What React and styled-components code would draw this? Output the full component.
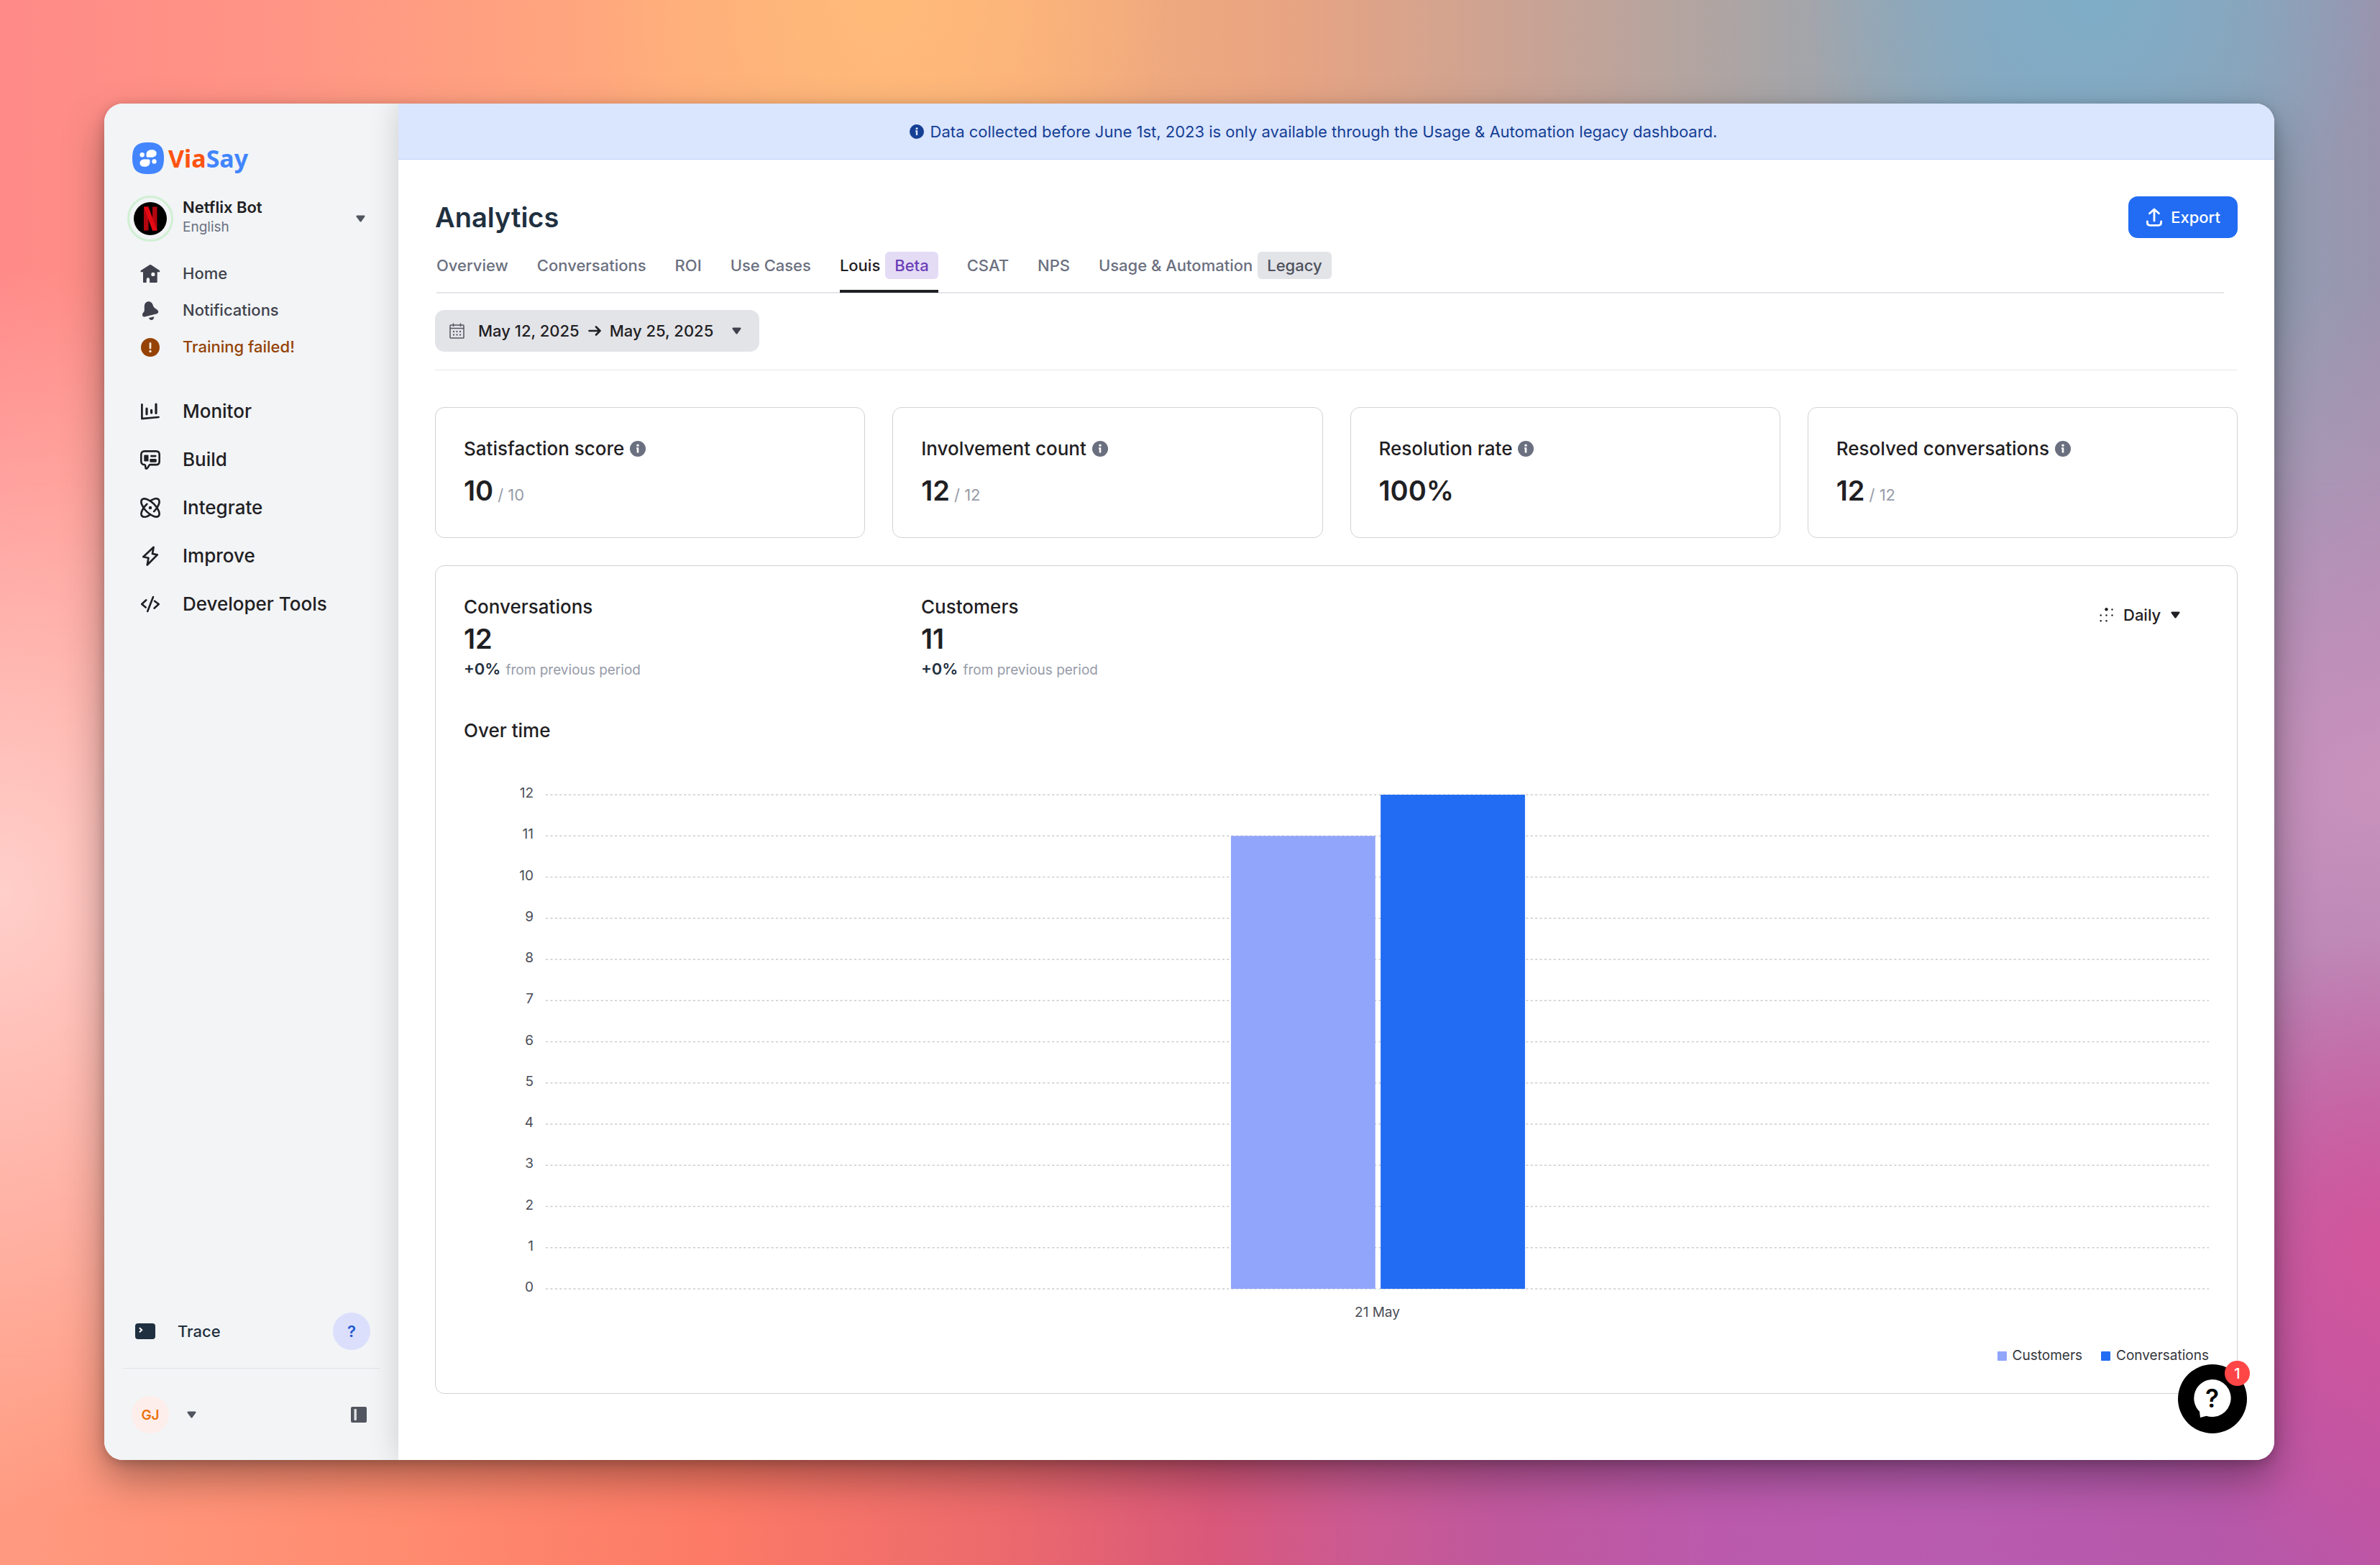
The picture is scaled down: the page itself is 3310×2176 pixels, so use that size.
import React from "react";
import styled, { createGlobalStyle, css } from "styled-components";

const ink = "#1f2023";
const slate = "#1f3040";
const muted = "#6b7080";
const faint = "#979ba8";
const line = "#d0d2d6";
const blue = "#226cf3";
const periwinkle = "#91a5fb";

const GlobalStyle = createGlobalStyle`
  *, *::before, *::after { box-sizing: border-box; }
  body {
    margin: 0;
    font-family: Inter, "Liberation Sans", sans-serif;
    color: ${ink};
    -webkit-font-smoothing: antialiased;
  }
  button, select { font: inherit; color: inherit; border: 0; background: none; padding: 0; margin: 0; cursor: pointer; }
  a { color: inherit; text-decoration: none; }
  h1, h2, p, ul, dl, dd, dt { margin: 0; padding: 0; font-weight: inherit; }
  ul { list-style: none; }
  svg { display: block; flex: none; }
`;

const Desktop = styled.div`
  position: relative;
  isolation: isolate;
  display: flex;
  min-height: 100vh;
  padding: 144px 147px 146px 145px;
  background:
    radial-gradient(ellipse 12% 18% at 88% 0%, #7fadc8 0%, #7fadc800 100%),
    radial-gradient(ellipse 12% 22% at 37% 0%, #ffba79 0%, #ffba7900 100%),
    linear-gradient(90deg, #ff8a88 0%, #ff9585 12%, #ffab7c 28%, #fcb179 40%, #e8a482 54%, #caa394 64%, #a9a5a6 74%, #8ba6bb 84%, #8fa0b4 94%, #9a94ae 100%);

  &::before {
    content: "";
    position: absolute;
    inset: 0;
    z-index: -1;
    background: linear-gradient(90deg, #ff9a80 0%, #ff8c70 16%, #fc7a66 30%, #ec6a6c 42%, #d9587a 51%, #cb5a92 57%, #c0589d 63%, #bb5aac 72%, #b85cb0 82%, #b658a9 93%, #bd55a5 100%);
    mask-image: linear-gradient(transparent 30%, #000 88%);
  }

  &::after {
    content: "";
    position: absolute;
    inset: 0;
    z-index: -1;
    background:
      radial-gradient(ellipse 22% 40% at 0% 57%, #ffcfca 0%, #ffcfca00 100%),
      radial-gradient(ellipse 12% 20% at 100% 80%, #d3559b 0%, #d3559b00 100%),
      radial-gradient(ellipse 24% 32% at 100% 50%, #c992bd 0%, #c992bd00 100%);
  }
`;

const Window = styled.div`
  position: relative;
  display: flex;
  flex: 1;
  min-width: 0;
  border-radius: 26px;
  overflow: hidden;
  background: #fff;
`;

const WindowShadow = styled.div`
  display: flex;
  flex: 1;
  min-width: 0;
  border-radius: 26px;
  box-shadow: 0 26px 56px rgba(0, 0, 0, 0.34), 0 4px 16px rgba(0, 0, 0, 0.2);
`;

/* ---------- Sidebar ---------- */

const Sidebar = styled.aside`
  display: flex;
  flex-direction: column;
  flex: none;
  width: 409px;
  padding: 54px 26px 37px;
  background: #f2f4f6;
`;

const Brand = styled.a`
  display: flex;
  align-items: center;
  gap: 6px;
  height: 44px;
  padding-left: 13px;
  font: 700 34px/44px "Noto Sans", "Open Sans", sans-serif;
  color: #ff5310;
`;

const BrandAccent = styled.span`
  color: #4285ff;
`;

const BotSwitcher = styled.button`
  display: flex;
  align-items: center;
  gap: 13px;
  margin-top: 30px;
  padding: 0 20px 0 6px;
  text-align: left;
`;

const BotAvatar = styled.span`
  display: grid;
  place-items: center;
  width: 64px;
  height: 64px;
  border: 3px solid #d0f0d2;
  border-radius: 50%;
`;

const BotText = styled.span`
  display: grid;
  flex: 1;
  padding-bottom: 4px;
`;

const BotName = styled.span`
  font-size: 22px;
  font-weight: 600;
  line-height: 28px;
`;

const BotLanguage = styled.span`
  font-size: 19px;
  line-height: 28px;
  color: ${muted};
`;

const NavList = styled.ul`
  margin-top: ${(p) => (p.$large ? 30 : 19)}px;
`;

const NavLink = styled.a`
  display: flex;
  align-items: center;
  gap: 13px;
  padding-left: 6px;
  font-weight: 500;
  color: ${(p) => (p.$alert ? "#954204" : "#3f424c")};
  font-size: 22px;
  line-height: 51px;
  ${(p) =>
    p.$large &&
    css`
      color: ${ink};
      font-size: 26px;
      line-height: 67px;
    `}
`;

const NavIcon = styled.span`
  display: grid;
  place-items: center;
  width: 64px;
`;

const TraceRow = styled.div`
  display: flex;
  align-items: center;
  justify-content: space-between;
  margin-top: auto;
  padding: 0 13px 25px 17px;
  border-bottom: 1px solid #e1e3e6;
`;

const TraceLink = styled.a`
  display: flex;
  align-items: center;
  gap: 31px;
  font-size: 22px;
  font-weight: 500;
  color: ${slate};
`;

const RoundBadge = styled.span`
  display: grid;
  place-items: center;
  width: 52px;
  height: 52px;
  border-radius: 50%;
  font-weight: 600;
  font-size: ${(p) => (p.$orange ? 19 : 22)}px;
  color: ${(p) => (p.$orange ? "#ec710b" : "#2158cf")};
  background: ${(p) => (p.$orange ? "#feeeeb" : "#dbdffc")};
`;

const AccountRow = styled.div`
  display: flex;
  align-items: center;
  justify-content: space-between;
  padding: 38px 18px 0 12px;
`;

const AccountButton = styled.button`
  display: flex;
  align-items: center;
  gap: 25px;
`;

/* ---------- Main ---------- */

const Main = styled.main`
  position: relative;
  flex: 1;
  min-width: 0;
  background: #fff;
  box-shadow: 0 0 39px rgba(0, 0, 0, 0.16);
`;

const Notice = styled.p`
  display: flex;
  align-items: center;
  justify-content: center;
  gap: 9px;
  height: 78px;
  padding-right: 64px;
  border-bottom: 1px solid #bfd0f8;
  background: #dae5fe;
  color: #143f94;
  font-size: 22px;
`;

const Content = styled.div`
  padding: 51px;
`;

const TitleRow = styled.header`
  display: flex;
  align-items: center;
  justify-content: space-between;
`;

const Title = styled.h1`
  font-size: 38px;
  font-weight: 600;
  line-height: 58px;
  color: ${slate};
`;

const ExportButton = styled.button`
  display: flex;
  align-items: center;
  gap: 11px;
  height: 58px;
  padding: 0 24px;
  border-radius: 13px;
  background: ${blue};
  color: #fff;
  font-size: 22px;
  font-weight: 500;
`;

const Tabs = styled.nav`
  display: flex;
  gap: 40px;
  margin: 19px 19px 0 2px;
  border-bottom: 2px solid #e4e5e8;
`;

const Tab = styled.a`
  display: flex;
  align-items: center;
  gap: 7px;
  margin-bottom: -1px;
  padding-bottom: 15px;
  border-bottom: 4px solid ${(p) => (p.$active ? ink : "transparent")};
  color: ${(p) => (p.$active ? ink : muted)};
  font-size: 22px;
  font-weight: 500;
  line-height: 38px;
`;

const Tag = styled.span`
  padding: 0 13px;
  border-radius: 6px;
  color: ${(p) => (p.$violet ? "#6b3fb8" : "#4d515c")};
  background: ${(p) => (p.$violet ? "#e4dcf5" : "#e3e4e8")};
`;

const Filters = styled.div`
  display: flex;
  margin-top: 23px;
  padding-bottom: 25px;
  border-bottom: 1px solid #e6e7ea;
`;

const DateButton = styled.button`
  display: flex;
  align-items: center;
  gap: 12px;
  height: 58px;
  padding: 0 25px 0 20px;
  border-radius: 13px;
  background: #e3e4e8;
  font-size: 22px;
  font-weight: 500;

  & > :first-child { margin-right: 7px; }
  & > :last-child { margin-left: 14px; }
`;

const KpiGrid = styled.section`
  display: grid;
  grid-template-columns: repeat(4, 1fr);
  gap: 38px;
  margin-top: 51px;
`;

const Card = styled.article`
  padding: 40px 39px;
  border: 1px solid ${line};
  border-radius: 13px;
  background: #fff;
`;

const CardTitle = styled.h2`
  display: flex;
  align-items: center;
  gap: 8px;
  font-size: 26px;
  font-weight: 500;
  line-height: 34px;
`;

const Figure = styled.p`
  display: flex;
  align-items: baseline;
  gap: 6px;
  height: 50px;
  margin-top: ${(p) => (p.$tight ? 2 : 16)}px;
  font-size: 38px;
  font-weight: 600;
  line-height: 50px;
`;

const OutOf = styled.span`
  font-size: 22px;
  font-weight: 400;
  line-height: 24px;
  color: ${faint};
`;

const ChartCard = styled(Card)`
  margin-top: 38px;
`;

const Totals = styled.div`
  display: flex;
`;

const Total = styled.section`
  flex: 0 0 636px;
`;

const Change = styled.p`
  display: flex;
  align-items: baseline;
  gap: 7px;
  height: 30px;
  margin-top: 2px;
  font-size: 19px;
  line-height: 30px;
  color: ${faint};
`;

const ChangeValue = styled.span`
  font-size: 22px;
  font-weight: 600;
  color: ${slate};
`;

const PeriodPicker = styled.label`
  display: flex;
  align-items: center;
  gap: 13px;
  height: 56px;
  margin-left: auto;
  padding-right: 40px;
  font-size: 22px;
  font-weight: 500;
`;

const PeriodSelect = styled.select`
  appearance: none;
  line-height: 30px;
`;

const ChartTitle = styled(CardTitle)`
  margin-top: 54px;
`;

const Chart = styled.figure`
  display: grid;
  grid-template-columns: 97px 1fr;
  column-gap: 17px;
  margin: 60px 0 0;
  font-size: 19px;
  color: #4a4d57;
`;

const ValueAxis = styled.div`
  display: flex;
  flex-direction: column;
  justify-content: space-between;
  height: 707px;
  text-align: right;
  line-height: 20px;
`;

const Plot = styled.svg`
  width: 100%;
  height: 689px;
  margin-top: 11px;
`;

const CategoryAxis = styled.div`
  grid-column: 2;
  margin-top: 13px;
  text-align: center;
  line-height: 24px;
`;

const Legend = styled.figcaption`
  grid-column: 2;
  display: flex;
  justify-content: flex-end;
  gap: 26px;
  margin-top: 36px;
  color: #34363c;
  line-height: 24px;
`;

const LegendItem = styled.span`
  display: flex;
  align-items: center;
  gap: 8px;
  &::before {
    content: "";
    width: 13px;
    height: 13px;
    border-radius: 1px;
    background: ${(p) => p.$color};
  }
`;

const ChatButton = styled.button`
  position: absolute;
  right: 38px;
  bottom: 37px;
  width: 96px;
  height: 96px;
  border-radius: 50%;
  background: #000;
`;

const Unread = styled.span`
  position: absolute;
  top: -5px;
  right: -4px;
  display: grid;
  place-items: center;
  width: 35px;
  height: 35px;
  border-radius: 50%;
  background: #ff4646;
  color: #fff;
  font-size: 20px;
  font-weight: 500;
`;

/* ---------- Icons ---------- */

const Caret = ({ color = "#51555f" }) => (
  <svg width="13" height="10" viewBox="0 0 13 10" fill={color} aria-hidden="true">
    <path d="M1.6.4h9.8c1 0 1.5 1.2.8 2L7.5 8.900c-.5.7-1.5.7-2 0L.7 2.400C.1 1.600.6.400 1.600.400Z" />
  </svg>
);

const InfoIcon = ({ size, color, hole }) => (
  <svg width={size} height={size} viewBox="0 0 22 22" aria-hidden="true">
    <circle cx="11" cy="11" r="11" fill={color} />
    <circle cx="11" cy="6.300" r="1.700" fill={hole} />
    <path d="M9 9.200h3.300V16.600h-2.600v-5.400H9Z" fill={hole} />
  </svg>
);

const BrandMark = () => (
  <svg width="44" height="44" viewBox="0 0 44 44" aria-hidden="true">
    <path d="M22 0C37 0 44 5 44 22S37 44 22 44 0 39 0 22 7 0 22 0Z" fill="#4285ff" />
    <g fill="#fff">
      <circle cx="13.700" cy="17.300" r="3.200" />
      <circle cx="30.500" cy="26.500" r="3.200" />
      <path d="M19.500 16.500c0-4 3-6.300 7.500-6.300 4.200 0 6.700 2 6.700 5s-2.500 5.500-6.700 5.500h-5.500c-1.300 0-2-.7-2-2Z" />
      <path d="M24.500 27.500c0 4-3 6.300-7.200 6.300-4.500 0-6.800-2-6.800-5.100 0-3 2.500-5.200 6.500-5.200h5.500c1.300 0 2 .7 2 2Z" />
    </g>
  </svg>
);

const NetflixMark = () => (
  <svg width="46" height="46" viewBox="0 0 46 46" aria-hidden="true">
    <circle cx="23" cy="23" r="23" fill="#000" />
    <rect x="14" y="6.500" width="6.500" height="33" fill="#b1060f" />
    <rect x="26" y="6.500" width="6.500" height="33" fill="#b1060f" />
    <path d="M14 6.500h6.500l12 33H26Z" fill="#e50914" />
  </svg>
);

const glyphs = {
  home: (
    <path
      fill="currentColor"
      fillRule="evenodd"
      d="M12.700 1.400 1 8.900C.1 9.500.3 11.300 1.600 11.300H4V24.900c0 .7.400 1.100 1.100 1.100h3.600v-4.500a2.200 2.600 0 0 1 4.400 0V26h9.300c.8 0 1.300-.4 1.300-1.200V11.300h2.400c1.300 0 1.700-1.600.7-2.400L15.500 1.400a2.500 2.500 0 0 0-2.800 0ZM17.900 11.800a2.600 2.600 0 1 1 0 5.200 2.600 2.600 0 0 1 0-5.200Z"
    />
  ),
  bell: (
    <path
      fill="currentColor"
      d="M3 20c0-3 2.700-4 2.800-6.500V8c0-4 2.700-6.700 6-6.700 3.300 0 5.300 2.500 6.300 6.200 1.100 3.700 7.100 4.600 7.100 8 0 2-1.500 2.600-3 3L7 22.300C5 22.800 3 22.200 3 20ZM12 24l7.200-1.800c.2 2.800-1.700 4.800-3.500 4.800-1.700 0-3.200-1-3.700-3Z"
    />
  ),
  alert: (
    <>
      <circle cx="14" cy="14" r="13" fill="currentColor" />
      <path d="M14 8.500v6.500" stroke="#f3e4d8" strokeWidth="2.800" strokeLinecap="round" />
      <circle cx="14" cy="19.500" r="1.700" fill="#f3e4d8" />
    </>
  ),
  monitor: (
    <g fill="none" stroke="currentColor" strokeLinecap="round" strokeLinejoin="round">
      <path strokeWidth="2.700" d="M2.400 4.400V24.200L25.600 22" />
      <path strokeWidth="3.200" d="M9 10v7.800M15.600 12.400v3.600M22 4v12.500" />
    </g>
  ),
  build: (
    <>
      <path
        fill="none"
        stroke="currentColor"
        strokeWidth="2.600"
        strokeLinejoin="round"
        d="M6 2.400h16c3 0 4.700 1.700 4.700 4.700v9.300c0 3-1.700 4.700-4.700 4.700h-8.400c-2 0-2.300 5.600-5.300 5.600-1.600 0-.2-5.200-2.300-5.600-3 0-4.700-1.700-4.700-4.700V7.100c0-3 1.700-4.700 4.700-4.700Z"
      />
      <rect x="5.300" y="7.400" width="6.200" height="9" rx="1.200" fill="currentColor" />
      <rect x="14" y="7.800" width="8.600" height="2.600" rx="1.300" fill="currentColor" />
      <rect x="13.300" y="13" width="9.400" height="4.800" rx="1.200" fill="currentColor" />
    </>
  ),
  integrate: (
    <g transform="translate(-2.800 -2.800) scale(1.400)" fill="none" stroke="currentColor" strokeWidth="1.900" strokeLinecap="round">
      <circle cx="12" cy="12" r="1.600" fill="currentColor" stroke="none" />
      <path d="M20.200 20.200c2.040-2.030.02-7.360-4.500-11.900-4.540-4.520-9.870-6.540-11.900-4.500-2.040 2.030-.02 7.360 4.500 11.900 4.540 4.520 9.870 6.540 11.900 4.500Z" />
      <path d="M12 5.200c3.600-2.400 6.700-2.900 8.200-1.400 2 2 0 7.400-4.500 11.900M8.700 8.300c-4.900 4.500-6.900 9.900-4.900 11.900 1.500 1.500 4.600 1 8.200-1.400" />
    </g>
  ),
  improve: (
    <path
      fill="none"
      stroke="currentColor"
      strokeWidth="2.700"
      strokeLinejoin="round"
      d="M18.600 1.800 4.300 15.300l7.200 1.500-1.700 9.700L23.800 12.400 17 11Z"
    />
  ),
  code: (
    <path
      fill="none"
      stroke="currentColor"
      strokeWidth="2.600"
      strokeLinecap="round"
      strokeLinejoin="round"
      d="M8.300 8.300 2.200 14l5.500 4.500M18 4l-7.800 20M20 9.700l5.800 4.300-6.300 5.700"
    />
  ),
};

const Glyph = ({ name }) => (
  <svg width="28" height="28" viewBox="0 0 28 28" aria-hidden="true">
    {glyphs[name]}
  </svg>
);

const TraceIcon = () => (
  <svg width="28" height="22" viewBox="0 0 28 22" aria-hidden="true">
    <rect width="28" height="22" rx="4" fill={slate} />
    <path d="m6.500 6.800 2.700 2.500-2.700 2.500" fill="none" stroke="#fff" strokeWidth="2" strokeLinecap="round" />
  </svg>
);

const PanelIcon = () => (
  <svg width="22" height="22" viewBox="0 0 22 22" aria-hidden="true">
    <rect width="22" height="22" rx="2" fill="#51555f" />
    <rect x="4.500" y="3" width="3.400" height="16" rx="1.200" fill="#dfe1e4" />
  </svg>
);

const ExportIcon = () => (
  <svg width="24" height="28" viewBox="0 0 24 28" fill="none" stroke="#fff" strokeWidth="2.800" strokeLinecap="round" strokeLinejoin="round" aria-hidden="true">
    <path d="M12 19V4M5.500 8.800 12 3l6.500 5.800" />
    <path d="M2.400 20v1.600c0 2.600 1.400 3.800 4 3.800h11.200c2.600 0 4-1.200 4-3.800V20" />
  </svg>
);

const CalendarIcon = () => (
  <svg width="21" height="22" viewBox="0 0 21 22" fill="none" stroke="#51555f" strokeWidth="1.500" aria-hidden="true">
    <rect x="1" y="3" width="19" height="18" rx=".8" />
    <path d="M1 7.600h19M5.500.5V5M15.500.5V5" />
    <path strokeWidth="2" strokeDasharray="2 2.500" d="M5 12h11M5 16.500h11" />
  </svg>
);

const ArrowIcon = () => (
  <svg width="18" height="18" viewBox="0 0 18 18" fill="none" stroke={ink} strokeWidth="2.600" strokeLinecap="round" strokeLinejoin="round" aria-hidden="true">
    <path d="M1.500 9h15M11 3.500 16.500 9 11 14.500" />
  </svg>
);

const DotsIcon = () => (
  <svg width="20" height="20" viewBox="0 0 20 20" fill={ink} aria-hidden="true">
    <circle cx="9.500" cy="2.300" r="2.200" />
    {[[17.5, 2.5], [17.5, 10.5], [1.7, 10.5], [9.5, 10.5], [1.7, 18.3], [9.5, 18.3]].map(([x, y]) => (
      <circle key={`${x}-${y}`} cx={x} cy={y} r="1.200" />
    ))}
  </svg>
);

const ChatIcon = () => (
  <svg width="96" height="96" viewBox="0 0 96 96" aria-hidden="true">
    <path fill="#fff" d="M47.500 21a26 26 0 1 1-8 50.700L31 74l-1-8.500A26 26 0 0 1 47.500 21Z" />
    <text x="47.500" y="60" textAnchor="middle" fontSize="35" fontWeight="600" fontFamily="Inter, sans-serif">
      ?
    </text>
  </svg>
);

/* ---------- Data ---------- */

const shortcuts = [
  { icon: "home", label: "Home" },
  { icon: "bell", label: "Notifications" },
  { icon: "alert", label: "Training failed!", alert: true },
];

const sections = [
  { icon: "monitor", label: "Monitor" },
  { icon: "build", label: "Build" },
  { icon: "integrate", label: "Integrate" },
  { icon: "improve", label: "Improve" },
  { icon: "code", label: "Developer Tools" },
];

const tabs = [
  { label: "Overview" },
  { label: "Conversations" },
  { label: "ROI" },
  { label: "Use Cases" },
  { label: "Louis", tag: "Beta", active: true },
  { label: "CSAT" },
  { label: "NPS" },
  { label: "Usage & Automation", tag: "Legacy" },
];

const kpis = [
  { title: "Satisfaction score", value: "10", outOf: "10" },
  { title: "Involvement count", value: "12", outOf: "12" },
  { title: "Resolution rate", value: "100%" },
  { title: "Resolved conversations", value: "12", outOf: "12" },
];

const totals = [
  { title: "Conversations", value: 12 },
  { title: "Customers", value: 11 },
];

const series = [
  { name: "Customers", value: 11, color: periwinkle, x: 41.2 },
  { name: "Conversations", value: 12, color: blue, x: 50.2 },
];

const maxValue = 12;
const step = 57.25;
const ticks = Array.from({ length: maxValue + 1 }, (_, i) => maxValue - i);

export default function App() {
  return (
    <>
      <GlobalStyle />
      <Desktop>
        <WindowShadow>
          <Window>
            <Sidebar>
              <Brand href="#">
                <BrandMark />
                <span>
                  Via<BrandAccent>Say</BrandAccent>
                </span>
              </Brand>
              <BotSwitcher type="button">
                <BotAvatar>
                  <NetflixMark />
                </BotAvatar>
                <BotText>
                  <BotName>Netflix Bot</BotName>
                  <BotLanguage>English</BotLanguage>
                </BotText>
                <Caret />
              </BotSwitcher>
              <nav>
                <NavList>
                  {shortcuts.map((s) => (
                    <li key={s.label}>
                      <NavLink href="#" $alert={s.alert}>
                        <NavIcon>
                          <Glyph name={s.icon} />
                        </NavIcon>
                        {s.label}
                      </NavLink>
                    </li>
                  ))}
                </NavList>
                <NavList $large>
                  {sections.map((s) => (
                    <li key={s.label}>
                      <NavLink href="#" $large>
                        <NavIcon>
                          <Glyph name={s.icon} />
                        </NavIcon>
                        {s.label}
                      </NavLink>
                    </li>
                  ))}
                </NavList>
              </nav>
              <TraceRow>
                <TraceLink href="#">
                  <TraceIcon />
                  Trace
                </TraceLink>
                <RoundBadge as="button" type="button">
                  ?
                </RoundBadge>
              </TraceRow>
              <AccountRow>
                <AccountButton type="button">
                  <RoundBadge $orange>GJ</RoundBadge>
                  <Caret />
                </AccountButton>
                <button type="button" aria-label="Collapse sidebar">
                  <PanelIcon />
                </button>
              </AccountRow>
            </Sidebar>

            <Main>
              <Notice>
                <InfoIcon size={20} color="#143f94" hole="#dae5fe" />
                Data collected before June 1st, 2023 is only available through the Usage &amp; Automation legacy dashboard.
              </Notice>
              <Content>
                <TitleRow>
                  <Title>Analytics</Title>
                  <ExportButton type="button">
                    <ExportIcon />
                    Export
                  </ExportButton>
                </TitleRow>
                <Tabs>
                  {tabs.map((t) => (
                    <Tab key={t.label} href="#" $active={t.active}>
                      {t.label}
                      {t.tag && <Tag $violet={t.active}>{t.tag}</Tag>}
                    </Tab>
                  ))}
                </Tabs>
                <Filters>
                  <DateButton type="button">
                    <CalendarIcon />
                    <span>May 12, 2025</span>
                    <ArrowIcon />
                    <span>May 25, 2025</span>
                    <Caret color="#3f424c" />
                  </DateButton>
                </Filters>
                <KpiGrid>
                  {kpis.map((k) => (
                    <Card key={k.title}>
                      <CardTitle>
                        {k.title}
                        <InfoIcon size={22} color={muted} hole="#fff" />
                      </CardTitle>
                      <Figure>
                        {k.value}
                        {k.outOf && <OutOf>/ {k.outOf}</OutOf>}
                      </Figure>
                    </Card>
                  ))}
                </KpiGrid>
                <ChartCard>
                  <Totals>
                    {totals.map((t) => (
                      <Total key={t.title}>
                        <CardTitle>{t.title}</CardTitle>
                        <Figure $tight>{t.value}</Figure>
                        <Change>
                          <ChangeValue>+0%</ChangeValue>
                          from previous period
                        </Change>
                      </Total>
                    ))}
                    <PeriodPicker>
                      <DotsIcon />
                      <PeriodSelect aria-label="Period">
                        <option>Daily</option>
                      </PeriodSelect>
                      <Caret color={ink} />
                    </PeriodPicker>
                  </Totals>
                  <ChartTitle>Over time</ChartTitle>
                  <Chart>
                    <ValueAxis>
                      {ticks.map((t) => (
                        <span key={t}>{t}</span>
                      ))}
                    </ValueAxis>
                    <Plot role="img" aria-label="Customers and conversations per day">
                      {ticks.map((t, i) => (
                        <line
                          key={t}
                          x1="0"
                          x2="100%"
                          y1={1 + i * step}
                          y2={1 + i * step}
                          stroke="#cccdd0"
                          strokeWidth="1.6"
                          strokeDasharray="3.2 3.2"
                        />
                      ))}
                      {series.map((s) => (
                        <rect
                          key={s.name}
                          x={`${s.x}%`}
                          y={1 + (maxValue - s.value) * step}
                          width="8.68%"
                          height={s.value * step}
                          fill={s.color}
                        />
                      ))}
                    </Plot>
                    <CategoryAxis>21 May</CategoryAxis>
                    <Legend>
                      {series.map((s) => (
                        <LegendItem key={s.name} $color={s.color}>
                          {s.name}
                        </LegendItem>
                      ))}
                    </Legend>
                  </Chart>
                </ChartCard>
              </Content>
              <ChatButton type="button" aria-label="Open chat">
                <ChatIcon />
                <Unread>1</Unread>
              </ChatButton>
            </Main>
          </Window>
        </WindowShadow>
      </Desktop>
    </>
  );
}
